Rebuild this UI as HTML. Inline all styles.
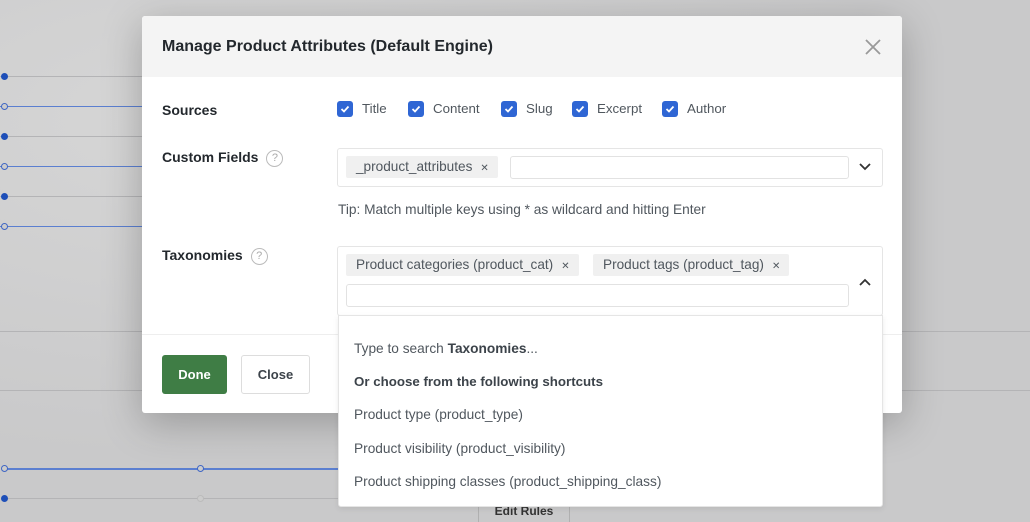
<!DOCTYPE html>
<html><head><style>
*{box-sizing:border-box;margin:0;padding:0}
body{width:1030px;height:518px;overflow:hidden;background:#c9c9ca;font-family:"Liberation Sans",sans-serif;position:relative;color:#3c434a}
.abs{position:absolute}
.hl{position:absolute;height:1px;background:#b4b4b6}
.bl{position:absolute;height:1px;background:#5b7fd0}
.dot{position:absolute;width:7px;height:7px;border-radius:50%;background:#1e4fb8}
.ring{position:absolute;width:7px;height:7px;border-radius:50%;border:1.5px solid #3f66c4;background:#ccc}
.modal{position:absolute;left:142px;top:16px;width:760px;height:397px;background:#fff;border-radius:3px;box-shadow:0 10px 40px rgba(0,0,0,.25)}
.hdr{height:61px;background:#f4f4f4;border-radius:3px 3px 0 0;position:relative}
.hdr h1{position:absolute;left:20px;top:22px;font-size:16px;font-weight:bold;color:#23282d}
.lbl{position:absolute;font-size:14px;font-weight:bold;color:#23282d}
.cb{position:absolute;width:16px;height:16px;background:#2f66d4;border-radius:3px;top:101px}
.cb svg{position:absolute;left:3px;top:3px}
.ct{position:absolute;top:101px;font-size:13.3px;color:#50575e}
.q{display:inline-block;width:17px;height:17px;border:1.5px solid #bbb;border-radius:50%;color:#aaa;font-size:11px;text-align:center;line-height:14px;font-weight:normal;vertical-align:middle;margin-left:8px}
.box{position:absolute;border:1px solid #e5e5e5;border-radius:3px;background:#fff}
.tag{position:absolute;background:#f0f0f0;border-radius:2px;font-size:13.6px;color:#50575e;padding:0 9px 0 10px;height:22px;line-height:22px;white-space:nowrap}
.tag b{font-weight:normal;font-size:10px;margin-left:8px}
.inp{position:absolute;border:1px solid #e2e2e2;border-radius:3px;height:23px;background:#fff}
.dd{position:absolute;font-size:13.7px;color:#50575e;white-space:nowrap}
</style></head><body>
<div class="abs" style="left:0;top:0;width:1030px;height:518px;background:radial-gradient(ellipse at 200px 120px,#d6d6d6,transparent 60%)"></div>
<div class="hl" style="left:0;top:76px;width:142px"></div>
<div class="bl" style="left:0;top:106px;width:142px"></div>
<div class="hl" style="left:0;top:136px;width:142px"></div>
<div class="bl" style="left:0;top:166px;width:142px"></div>
<div class="hl" style="left:0;top:196px;width:142px"></div>
<div class="bl" style="left:0;top:226px;width:142px"></div>
<div class="dot" style="left:1px;top:73px"></div><div class="ring" style="left:1px;top:103px"></div>
<div class="dot" style="left:1px;top:133px"></div><div class="ring" style="left:1px;top:163px"></div>
<div class="dot" style="left:1px;top:193px"></div><div class="ring" style="left:1px;top:223px"></div>
<div class="hl" style="left:0;top:331px;width:1030px"></div>
<div class="hl" style="left:0;top:390px;width:1030px"></div>
<div class="bl" style="left:4px;top:468px;width:334px;height:2px"></div>
<div class="ring" style="left:1px;top:465px"></div><div class="ring" style="left:197px;top:465px"></div>
<div class="hl" style="left:4px;top:498px;width:334px"></div>
<div class="dot" style="left:1px;top:495px"></div><div class="ring" style="left:197px;top:495px;border-color:#bbb"></div>
<div class="abs" style="left:478px;top:502px;width:92px;height:20px;border-left:1px solid #b0b0b0;border-right:1px solid #b0b0b0;font-size:12px;font-weight:bold;color:#333;text-align:center;padding-top:2px">Edit Rules</div>

<div class="modal">
<div class="hdr"><h1>Manage Product Attributes (Default Engine)</h1>
<svg class="abs" style="left:723px;top:23px" width="16" height="16"><path d="M1 1L15 15M15 1L1 15" stroke="#999" stroke-width="1.8"/></svg></div>
</div>
<div class="abs" style="left:142px;top:334px;width:760px;height:1px;background:#eee"></div>
<div class="lbl" style="left:162px;top:102px">Sources</div>
<div class="lbl" style="left:162px;top:149px">Custom Fields<span class="q">?</span></div>
<div class="lbl" style="left:162px;top:247px">Taxonomies<span class="q">?</span></div>

<div class="cb" style="left:337px"><svg width="10" height="10"><path d="M1.5 5L4 7.5L8.5 2.5" stroke="#fff" stroke-width="1.8" fill="none"/></svg></div><div class="ct" style="left:362px">Title</div>
<div class="cb" style="left:408px"><svg width="10" height="10"><path d="M1.5 5L4 7.5L8.5 2.5" stroke="#fff" stroke-width="1.8" fill="none"/></svg></div><div class="ct" style="left:433px">Content</div>
<div class="cb" style="left:501px"><svg width="10" height="10"><path d="M1.5 5L4 7.5L8.5 2.5" stroke="#fff" stroke-width="1.8" fill="none"/></svg></div><div class="ct" style="left:526px">Slug</div>
<div class="cb" style="left:572px"><svg width="10" height="10"><path d="M1.5 5L4 7.5L8.5 2.5" stroke="#fff" stroke-width="1.8" fill="none"/></svg></div><div class="ct" style="left:597px">Excerpt</div>
<div class="cb" style="left:662px"><svg width="10" height="10"><path d="M1.5 5L4 7.5L8.5 2.5" stroke="#fff" stroke-width="1.8" fill="none"/></svg></div><div class="ct" style="left:687px">Author</div>

<div class="box" style="left:337px;top:148px;width:546px;height:39px"></div>
<div class="tag" style="left:346px;top:156px">_product_attributes<b>✕</b></div>
<div class="inp" style="left:510px;top:156px;width:339px"></div>
<svg class="abs" style="left:858px;top:162px" width="14" height="10"><path d="M2 2L7 7L12 2" stroke="#333" stroke-width="1.8" fill="none"/></svg>
<div class="dd" style="left:338px;top:202px">Tip: Match multiple keys using * as wildcard and hitting Enter</div>

<div class="box" style="left:337px;top:246px;width:546px;height:70px"></div>
<div class="tag" style="left:346px;top:254px">Product categories (product_cat)<b>✕</b></div>
<div class="tag" style="left:593px;top:254px">Product tags (product_tag)<b>✕</b></div>
<div class="inp" style="left:346px;top:284px;width:503px"></div>
<svg class="abs" style="left:858px;top:277px" width="14" height="10"><path d="M2 8L7 3L12 8" stroke="#333" stroke-width="1.8" fill="none"/></svg>

<div class="abs" style="left:162px;top:355px;width:65px;height:39px;background:#3f7d45;border-radius:3px;color:#fff;font-size:13px;font-weight:bold;text-align:center;line-height:39px">Done</div>
<div class="abs" style="left:241px;top:355px;width:69px;height:39px;border:1px solid #ddd;border-radius:3px;color:#3c434a;font-size:13px;font-weight:bold;text-align:center;line-height:37px;background:#fff">Close</div>

<div class="abs" style="left:338px;top:315px;width:545px;height:192px;background:#fff;border:1px solid #e5e5e5;border-radius:0 0 3px 3px;box-shadow:0 2px 6px rgba(0,0,0,.08)"></div>
<div class="dd" style="left:354px;top:341px">Type to search <span style="color:#3c434a;font-weight:600">Taxonomies</span>...</div>
<div class="dd" style="left:354px;top:374px;font-weight:bold;color:#3c434a;font-size:13.3px">Or choose from the following shortcuts</div>
<div class="dd" style="left:354px;top:407px">Product type (product_type)</div>
<div class="dd" style="left:354px;top:441px">Product visibility (product_visibility)</div>
<div class="dd" style="left:354px;top:474px">Product shipping classes (product_shipping_class)</div>
</body></html>
